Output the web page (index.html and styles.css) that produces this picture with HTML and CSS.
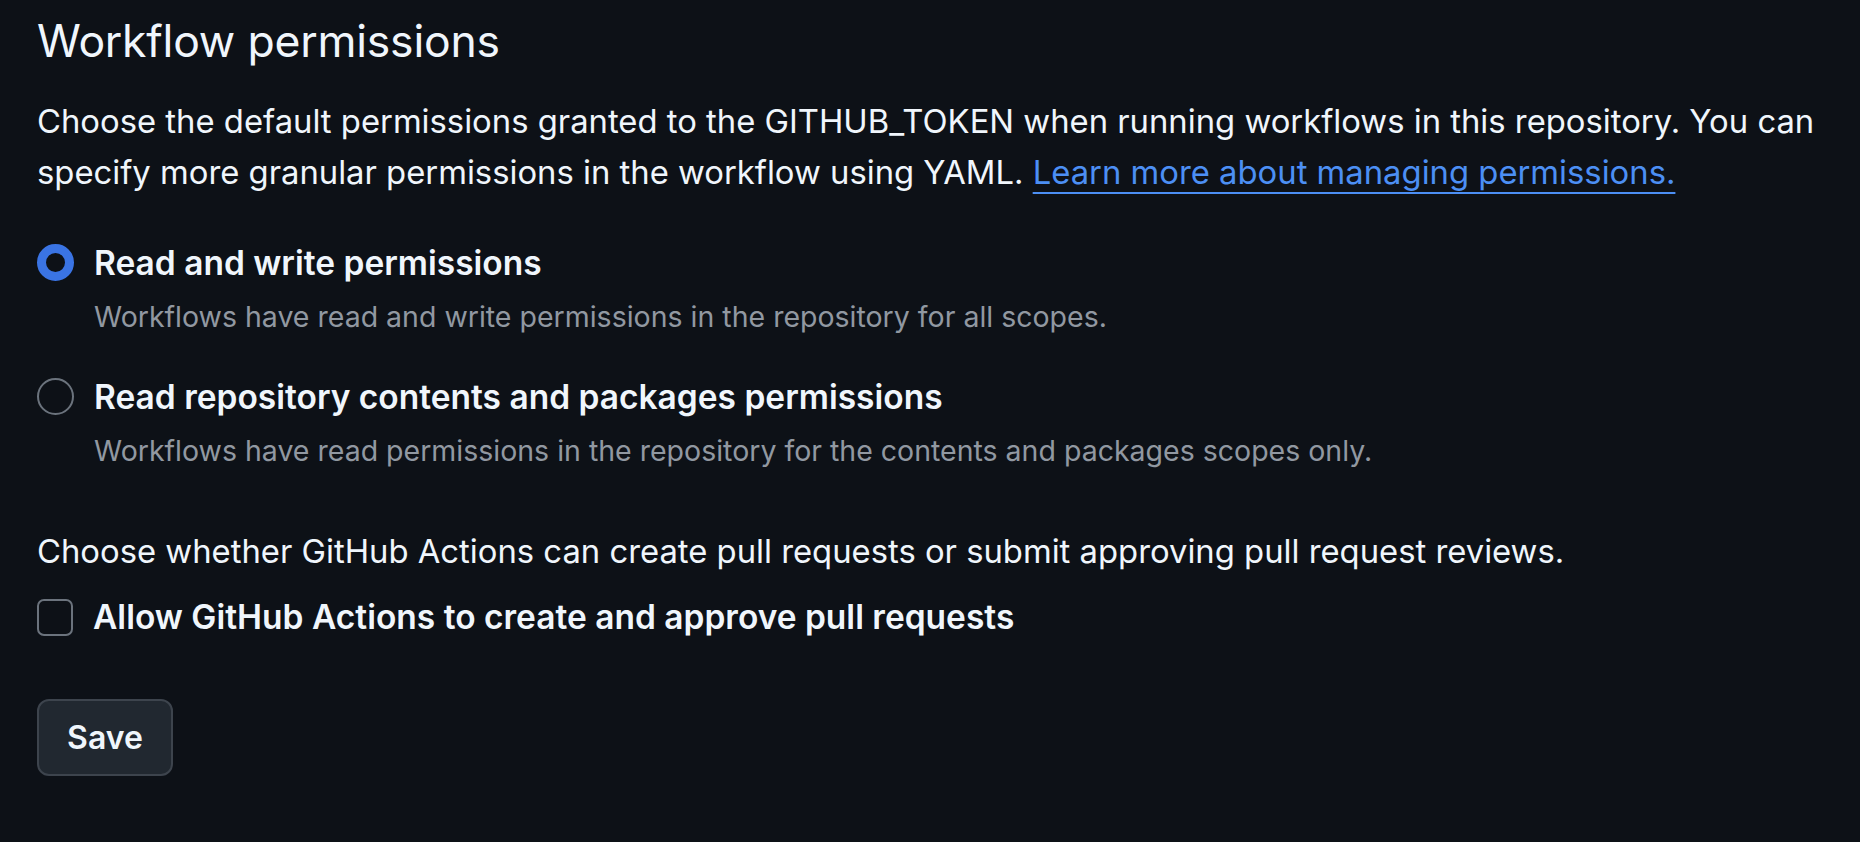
FILE: index.html
```html
<!DOCTYPE html>
<html lang="en">
<head>
<meta charset="utf-8">
<title>Workflow permissions</title>
<link rel="stylesheet" href="styles.css">
</head>
<body>
<main class="page">
  <h2 class="title">Workflow permissions</h2>
  <p class="intro">Choose the default permissions granted to the GITHUB_TOKEN when running workflows in this repository. You can specify more granular permissions in the workflow using YAML. <a href="#" class="link">Learn more about managing permissions.</a></p>

  <div class="options">
    <label class="option">
      <span class="radio radio-checked"></span>
      <span class="option-text">
        <span class="option-label">Read and write permissions</span>
        <span class="option-note">Workflows have read and write permissions in the repository for all scopes.</span>
      </span>
    </label>
    <label class="option">
      <span class="radio"></span>
      <span class="option-text">
        <span class="option-label">Read repository contents and packages permissions</span>
        <span class="option-note">Workflows have read permissions in the repository for the contents and packages scopes only.</span>
      </span>
    </label>
  </div>

  <p class="question">Choose whether GitHub Actions can create pull requests or submit approving pull request reviews.</p>
  <label class="check-row">
    <span class="checkbox"></span>
    <span class="option-label">Allow GitHub Actions to create and approve pull requests</span>
  </label>

  <button class="btn" type="button">Save</button>
</main>
</body>
</html>
```

FILE: styles.css
```css
* { box-sizing: border-box; }

html, body {
  margin: 0;
  background: #0d1117;
  color: #f0f6fc;
  font-family: Inter, "Noto Sans", "Liberation Sans", sans-serif;
}

.page {
  padding: 11px 20px 0 37px;
}

.title {
  margin: 0;
  font-size: 44.5px;
  font-weight: 400;
  line-height: 60px;
  letter-spacing: -0.2px;
}

.intro {
  margin: 25px 0 0;
  font-size: 32.8px;
  line-height: 51px;
}

.link {
  color: #4c8ff4;
  text-decoration: underline;
  text-underline-offset: 8px;
  text-decoration-thickness: 2px;
}

.options {
  margin-top: 40px;
  display: flex;
  flex-direction: column;
  gap: 34px;
}

.option {
  display: flex;
  align-items: flex-start;
  gap: 20px;
}

.radio {
  flex: none;
  width: 37px;
  height: 37px;
  margin-top: 6px;
  border-radius: 50%;
  border: 2.5px solid #6b737d;
}

.radio-checked {
  border: 9px solid #3a74e4;
}

.option-text {
  display: flex;
  flex-direction: column;
  gap: 7px;
}

.option-label {
  font-size: 33.5px;
  font-weight: 600;
  line-height: 50px;
}

.option-note {
  font-size: 28.5px;
  line-height: 43px;
  color: #9198a1;
}

.question {
  margin: 54px 0 0;
  font-size: 32.8px;
  line-height: 51px;
}

.check-row {
  margin-top: 15px;
  display: flex;
  align-items: center;
  gap: 20px;
}

.checkbox {
  flex: none;
  width: 36px;
  height: 37px;
  border-radius: 7px;
  border: 2.5px solid #6b737d;
}

.btn {
  margin-top: 57px;
  display: block;
  width: 136px;
  height: 77px;
  border-radius: 12px;
  border: 2px solid #3d444d;
  background: #212830;
  color: #f0f6fc;
  font-family: inherit;
  font-size: 32px;
  font-weight: 600;
  padding: 0;
}
```
